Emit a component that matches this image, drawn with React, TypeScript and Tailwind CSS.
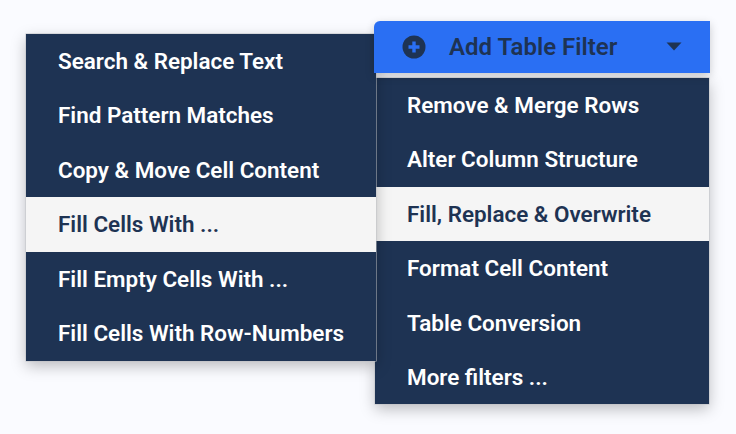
const left = ["Search & Replace Text", "Find Pattern Matches", "Copy & Move Cell Content", "Fill Cells With ...", "Fill Empty Cells With ...", "Fill Cells With Row-Numbers"];
const right = ["Remove & Merge Rows", "Alter Column Structure", "Fill, Replace & Overwrite", "Format Cell Content", "Table Conversion", "More filters ..."];

function Menu({ items, active, className }: { items: string[]; active: number; className: string }) {
  return (
    <ul className={"flex flex-col h-[326.5px] bg-[#1e3353] shadow-[0_0_0_0.5px_#bfc1c5,0_5px_14px_rgba(0,0,0,0.26)] " + className}>
      {items.map((t, i) => (
        <li
          key={t}
          className={
            "flex-1 flex items-center pl-[32px] text-[22.45px] font-semibold leading-none " +
            (i === active ? "bg-[#f5f5f5] text-[#1e3353]" : "text-white")
          }
        >
          {t}
        </li>
      ))}
    </ul>
  );
}

export default function App() {
  return (
    <div className="w-[736px] h-[434px] bg-[#fafbff] overflow-hidden flex items-start pl-[26px] pt-[21px] font-['Roboto',sans-serif]">
      <Menu items={left} active={3} className="w-[350px] mt-[13px] shrink-0 relative z-10" />
      <div className="w-[336px] -ml-[2px] shrink-0 flex flex-col">
        <div className="h-[51.7px] relative z-20 bg-[#2a6ff3] rounded-tl-[6px] flex items-center pl-[28px] pr-[28px] text-[#1e3353] shadow-[0_3px_10px_rgba(0,0,0,0.2)]">
          <svg width="24" height="24" viewBox="0 0 24 24" className="shrink-0">
            <circle cx="12" cy="12" r="11.5" fill="#1e3353" />
            <path d="M12 6.5v11M6.5 12h11" stroke="#2a6ff3" strokeWidth="3.4" />
          </svg>
          <span className="ml-[23px] text-[24px] font-semibold leading-none">Add Table Filter</span>
          <svg width="16" height="9" viewBox="0 0 16 9" className="ml-auto">
            <path d="M0.5 0.5h15L8 8.5z" fill="#1e3353" />
          </svg>
        </div>
        <Menu items={right} active={2} className="w-[334px] ml-[1px] mt-[5.3px]" />
      </div>
    </div>
  );
}
